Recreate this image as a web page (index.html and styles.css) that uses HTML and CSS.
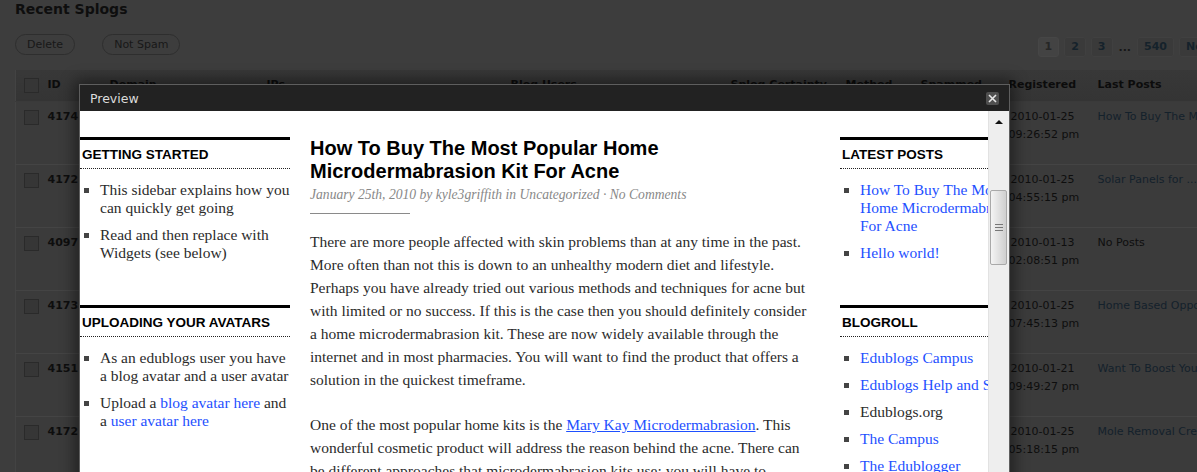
FILE: index.html
```html
<!DOCTYPE html>
<html>
<head>
<meta charset="utf-8">
<title>Recent Splogs</title>
<link rel="stylesheet" href="styles.css">
</head>
<body>
<div class="wrap">
  <h2 class="page-title">Recent Splogs</h2>
  <div class="tablenav">
    <div class="actions">
      <span class="btn">Delete</span>
      <span class="btn">Not Spam</span>
    </div>
    <div class="pages">
      <span class="page current">1</span>
      <span class="page">2</span>
      <span class="page">3</span>
      <span class="dots">...</span>
      <span class="page">540</span>
      <span class="page">Next &raquo;</span>
    </div>
  </div>
  <table class="splogs">
    <colgroup>
      <col class="c-cb"><col class="c-id"><col class="c-domain"><col class="c-ips"><col class="c-users"><col class="c-cert"><col class="c-method"><col class="c-spammed"><col class="c-reg"><col class="c-last">
    </colgroup>
    <thead>
      <tr>
        <th><span class="cb"></span></th><th>ID</th><th>Domain</th><th>IPs</th><th>Blog Users</th><th>Splog Certainty</th><th>Method</th><th>Spammed</th><th>Registered</th><th>Last Posts</th>
      </tr>
    </thead>
    <tbody>
      <tr>
        <td><span class="cb"></span></td><td class="id">4174</td><td><span class="link">acnekits.edublogs.org</span></td><td>94.102.49.10</td><td>kyle3griffith</td><td>92%</td><td>Auto</td><td>2010-01-26</td>
        <td class="reg">2010-01-25<br>09:26:52 pm</td><td class="last"><span class="link">How To Buy The Most Popular Home Microdermabrasion Kit</span></td>
      </tr>
      <tr>
        <td><span class="cb"></span></td><td class="id">4172</td><td><span class="link">solarhome.edublogs.org</span></td><td>94.102.49.10</td><td>solarguy</td><td>88%</td><td>Auto</td><td>2010-01-26</td>
        <td class="reg">2010-01-25<br>04:55:15 pm</td><td class="last"><span class="link">Solar Panels for ...</span></td>
      </tr>
      <tr>
        <td><span class="cb"></span></td><td class="id">4097</td><td><span class="link">homebiz.edublogs.org</span></td><td>78.46.101.22</td><td>bizowner</td><td>70%</td><td>Manual</td><td>2010-01-26</td>
        <td class="reg">2010-01-13<br>02:08:51 pm</td><td class="last">No Posts</td>
      </tr>
      <tr>
        <td><span class="cb"></span></td><td class="id">4173</td><td><span class="link">workathome.edublogs.org</span></td><td>78.46.101.22</td><td>homeopp</td><td>95%</td><td>Auto</td><td>2010-01-26</td>
        <td class="reg">2010-01-25<br>07:45:13 pm</td><td class="last"><span class="link">Home Based Opportunities</span></td>
      </tr>
      <tr>
        <td><span class="cb"></span></td><td class="id">4151</td><td><span class="link">boostyour.edublogs.org</span></td><td>91.121.12.4</td><td>booster</td><td>81%</td><td>Auto</td><td>2010-01-26</td>
        <td class="reg">2010-01-21<br>09:49:27 pm</td><td class="last"><span class="link">Want To Boost Your Energy</span></td>
      </tr>
      <tr>
        <td><span class="cb"></span></td><td class="id">4172</td><td><span class="link">moleremoval.edublogs.org</span></td><td>91.121.12.4</td><td>molecream</td><td>90%</td><td>Auto</td><td>2010-01-26</td>
        <td class="reg">2010-01-25<br>05:18:15 pm</td><td class="last"><span class="link">Mole Removal Cream Review</span></td>
      </tr>
    </tbody>
  </table>
</div>

<div class="modal">
  <div class="modal-head">
    <span class="modal-title">Preview</span>
    <span class="close"><svg width="13" height="13" viewBox="0 0 13 13"><path d="M3 3 L10 10 M10 3 L3 10" stroke="#e6e6e6" stroke-width="1.6" fill="none"/></svg></span>
  </div>
  <div class="modal-body">
    <div class="blog">
      <aside class="sidebar">
        <section class="widget">
          <h3>Getting Started</h3>
          <ul>
            <li>This sidebar explains how you can quickly get going</li>
            <li>Read and then replace with Widgets (see below)</li>
          </ul>
        </section>
        <section class="widget">
          <h3>Uploading Your Avatars</h3>
          <ul>
            <li>As an edublogs user you have a blog avatar and a user avatar</li>
            <li>Upload a <a>blog avatar here</a> and a <a>user avatar here</a></li>
          </ul>
        </section>
        <section class="widget">
          <h3>Archives</h3>
          <ul>
            <li><a>January 2010</a></li>
          </ul>
        </section>
      </aside>
      <main class="post">
        <h1 class="post-title">How To Buy The Most Popular Home Microdermabrasion Kit For Acne</h1>
        <div class="meta">January 25th, 2010 by kyle3griffith in Uncategorized &middot; No Comments</div>
        <div class="rule"></div>
        <p>There are more people affected with skin problems than at any time in the past. More often than not this is down to an unhealthy modern diet and lifestyle. Perhaps you have already tried out various methods and techniques for acne but with limited or no success. If this is the case then you should definitely consider a home microdermabrasion kit. These are now widely available through the internet and in most pharmacies. You will want to find the product that offers a solution in the quickest timeframe.</p>
        <p>One of the most popular home kits is the <a class="inline">Mary Kay Microdermabrasion</a>. This wonderful cosmetic product will address the reason behind the acne. There can be different approaches that microdermabrasion kits use; you will have to decide which one suits your skin type best.</p>
      </main>
      <aside class="sidebar right">
        <section class="widget">
          <h3>Latest Posts</h3>
          <ul>
            <li><a>How To Buy The Most Popular Home Microdermabrasion Kit For Acne</a></li>
            <li><a>Hello world!</a></li>
          </ul>
        </section>
        <section class="widget">
          <h3>Blogroll</h3>
          <ul>
            <li><a>Edublogs Campus</a></li>
            <li><a>Edublogs Help and Support</a></li>
            <li><a class="visited">Edublogs.org</a></li>
            <li><a>The Campus</a></li>
            <li><a>The Edublogger</a></li>
          </ul>
        </section>
      </aside>
    </div>
    <div class="scrollbar">
      <div class="sb-up"></div>
      <div class="sb-thumb"><i></i><i></i><i></i></div>
    </div>
  </div>
</div>
</body>
</html>
```

FILE: styles.css
```css
html, body {
  margin: 0;
  padding: 0;
}
body {
  position: relative;
  height: 472px;
  overflow: hidden;
  background: #3d3d3d;
  font-family: "DejaVu Sans", Verdana, sans-serif;
  font-size: 11px;
  color: #0c0c0c;
  -webkit-font-smoothing: antialiased;
}

/* ---------- dimmed admin page ---------- */
.wrap {
  width: 1218px;
  padding-left: 15px;
}
.page-title {
  margin: 0;
  font-size: 14px;
  line-height: 18px;
  font-weight: bold;
  color: #0e0e0e;
}
.tablenav {
  display: flex;
  align-items: flex-start;
  justify-content: space-between;
  margin-top: 16px;
}
.actions {
  display: flex;
  gap: 27px;
}
.btn {
  display: block;
  height: 19px;
  line-height: 19px;
  padding: 0 11px;
  border: 1px solid #2e2e2e;
  border-radius: 11px;
  color: #181818;
  font-size: 11px;
}
.pages {
  display: flex;
  align-items: center;
  gap: 5px;
  margin-top: 3px;
}
.page {
  display: block;
  height: 20px;
  line-height: 18px;
  padding: 0 6px;
  min-width: 20px;
  text-align: center;
  border-radius: 3px;
  background: #3a3a3a;
  border: 1px solid #404040;
  box-sizing: border-box;
  font-weight: bold;
  color: #15222b;
}
.page.current {
  background: #434343;
  border-color: #464646;
  color: #262626;
}
.dots {
  font-weight: bold;
  color: #161616;
  padding: 0 1px;
}

.splogs {
  margin-top: 13px;
  width: 100%;
  table-layout: fixed;
  border-collapse: collapse;
  border-left: 1px solid #434343;
}
.c-cb { width: 25px; }
.c-id { width: 62px; }
.c-domain { width: 157px; }
.c-ips { width: 244px; }
.c-users { width: 220px; }
.c-cert { width: 115px; }
.c-method { width: 75px; }
.c-spammed { width: 88px; }
.c-reg { width: 89px; }
.splogs th {
  height: 29px;
  padding: 0 7px 2px;
  text-align: left;
  font-weight: bold;
  white-space: nowrap;
  color: #0c0c0c;
  background: linear-gradient(#383838, #343434);
  border-bottom: 1px solid #3a3a3a;
}
.splogs th:first-child, .splogs td:first-child {
  padding-left: 8px;
  padding-right: 0;
}
.splogs td {
  height: 48px;
  padding: 6px 7px 8px;
  vertical-align: top;
  line-height: 18px;
  white-space: nowrap;
  overflow: hidden;
  border-bottom: 1px solid #444;
  background: #3b3b3b;
  color: #0e0e0e;
}
.splogs td:first-child { padding-top: 8px; padding-bottom: 6px; }
.splogs td.id { font-weight: bold; }
.splogs td.reg {
  text-align: right;
  padding-right: 16px;
}
.splogs td.last { overflow: visible; }
.link { color: #14212b; }
.cb {
  display: block;
  width: 13px;
  height: 13px;
  border: 1px solid #2a2a2a;
  background: #363636;
}
.splogs th .cb { margin-top: 2px; }

/* ---------- preview modal ---------- */
.modal {
  position: absolute;
  left: 79px;
  top: 84px;
  width: 931px;
  height: 420px;
  box-sizing: border-box;
  border: 1px solid #5e5e5e;
  background: #222;
  box-shadow: 0 0 14px 4px rgba(0, 0, 0, 0.45);
  display: flex;
  flex-direction: column;
}
.modal-head {
  height: 26px;
  flex: none;
  display: flex;
  align-items: center;
  justify-content: space-between;
  padding: 0 10px;
  background: #222;
}
.modal-title {
  font-size: 12.5px;
  color: #dcdcdc;
}
.close {
  display: block;
  width: 13px;
  height: 13px;
  border-radius: 2px;
  background: #4f4f4f;
}
.close svg { display: block; }
.modal-body {
  flex: 1;
  display: flex;
  background: #fff;
  overflow: hidden;
}

/* blog */
.blog {
  flex: 1;
  display: flex;
  align-items: flex-start;
  padding-top: 26px;
  overflow: hidden;
  font-family: "Liberation Serif", "Times New Roman", serif;
  color: #2b2b2b;
}
.blog a { color: #1e50ff; text-decoration: none; }
.blog a.visited { color: #2b2b2b; }
.blog a.inline { text-decoration: underline; }
.sidebar {
  width: 210px;
  flex: none;
}
.sidebar.right {
  width: 218px;
  margin-left: 30px;
}
.widget {
  border-top: 3px solid #000;
  margin-bottom: 43px;
}
.widget h3 {
  margin: 0;
  padding: 7px 2px 5px;
  font-family: "Liberation Sans", Arial, sans-serif;
  font-size: 13.5px;
  line-height: 16px;
  font-weight: bold;
  text-transform: uppercase;
  color: #000;
  border-bottom: 1px dotted #222;
}
.widget ul {
  margin: 12px 0 0;
  padding: 0 0 0 20px;
  list-style: square;
  font-size: 15.5px;
  line-height: 18px;
}
.widget li + li { margin-top: 9px; }
.widget li::marker { color: #444; }

.post {
  width: 500px;
  flex: none;
  margin-left: 20px;
}
.post-title {
  margin: 0;
  font-family: "Liberation Sans", Arial, sans-serif;
  font-size: 20px;
  line-height: 23px;
  font-weight: bold;
  color: #000;
}
.meta {
  margin-top: 3px;
  font-size: 13.6px;
  line-height: 18px;
  font-style: italic;
  color: #888;
}
.rule {
  width: 100px;
  height: 1px;
  background: #8a8a8a;
  margin-top: 9px;
}
.post p {
  margin: 16px 0 0;
  font-size: 15.5px;
  line-height: 23px;
}
.post p + p { margin-top: 22px; }

/* scrollbar */
.scrollbar {
  width: 20px;
  flex: none;
  background: #eeeeee;
  border-left: 1px solid #e2e2e2;
}
.sb-up {
  height: 21px;
  position: relative;
}
.sb-up::after {
  content: "";
  position: absolute;
  left: 6px;
  top: 9px;
  border-left: 4px solid transparent;
  border-right: 4px solid transparent;
  border-bottom: 4px solid #111;
}
.sb-thumb {
  margin: 58px 0 0 1px;
  width: 15px;
  height: 73px;
  border: 1px solid #a9a9a9;
  border-radius: 2px;
  background: linear-gradient(90deg, #f4f4f4, #dadada 70%, #cfcfcf);
  display: flex;
  flex-direction: column;
  align-items: center;
  justify-content: center;
  gap: 2px;
}
.sb-thumb i {
  display: block;
  width: 8px;
  height: 1px;
  background: #777;
}
```
